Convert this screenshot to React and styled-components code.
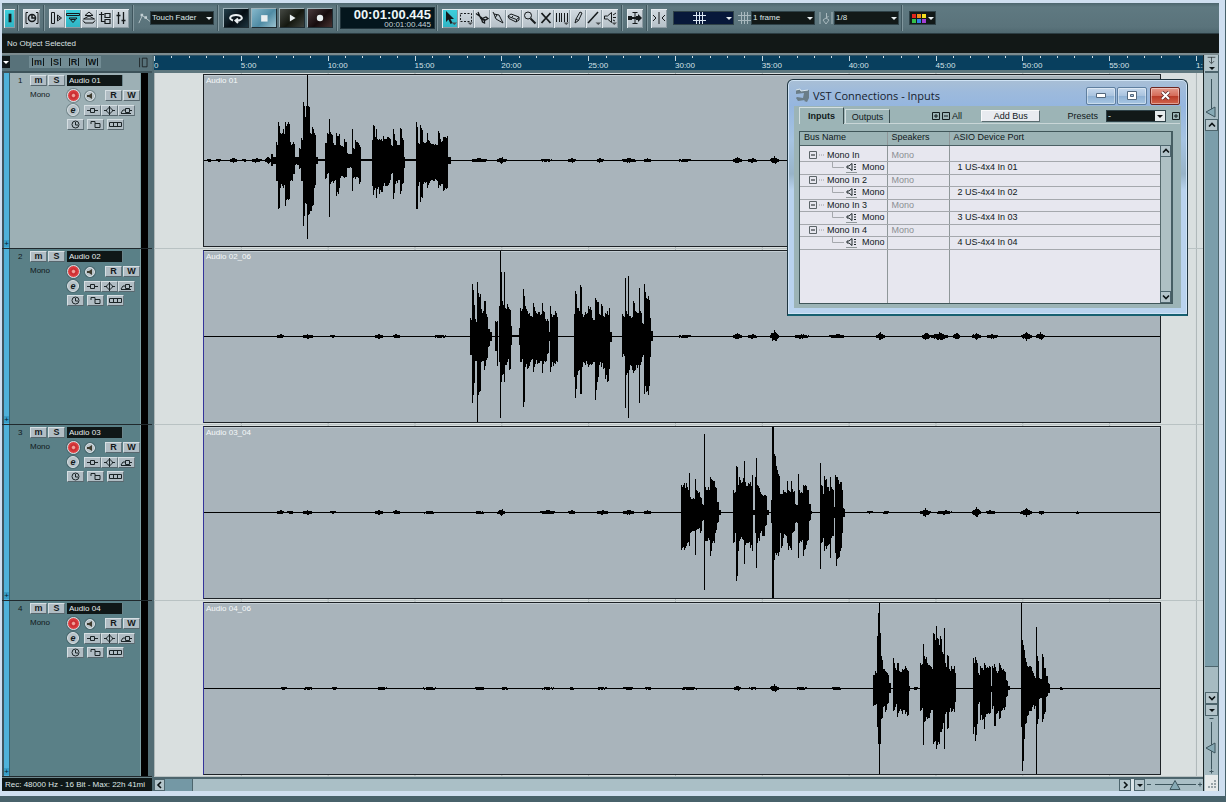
import { Fragment } from "react";
import styled, { createGlobalStyle, css } from "styled-components";

const GlobalStyle = createGlobalStyle`
  * {
    box-sizing: border-box;
  }
  body {
    margin: 0;
    font-family: "Liberation Sans", Arial, sans-serif;
    font-size: 8px;
    line-height: 10px;
    color: #10181a;
  }
  button, input, select {
    margin: 0;
    padding: 0;
    border: 0;
    border-radius: 0;
    font: inherit;
    color: inherit;
    appearance: none;
  }
  svg {
    display: block;
    flex: none;
  }
`

const Desktop = styled.div`
  display: flex;
  min-height: 100vh;
  padding: 0 1px 6px 0;
  background: #48626b;
`

const Frame = styled.div`
  position: relative;
  display: flex;
  flex-direction: column;
  flex: 1;
  min-width: 0;
  padding: 3px 6px 5px 2px;
  background: #cfdff0;
`

/* ---------- toolbar ---------- */

const Toolbar = styled.header`
  display: flex;
  align-items: center;
  height: 31px;
  padding: 0 2px;
  overflow: hidden;
  background: linear-gradient(#4d666e, #5f7981 4px, #5a737b 24px, #4f6870);
  border-bottom: 1px solid #2c3d43;
`

const Group = styled.div`
  display: flex;
  align-items: center;
  flex: none;
  gap: ${(p) => p.$gap || 0}px;
  height: 26px;
  padding: 0 ${(p) => p.$pad ?? 4}px;
  border-right: ${(p) => (p.$last ? 0 : 1)}px solid #81979e;
  box-shadow: ${(p) => (p.$last ? "none" : "inset -1px 0 #3f565e")};
`

const ToolButton = styled.button`
  display: flex;
  align-items: center;
  justify-content: center;
  width: ${(p) => p.$width || 16}px;
  height: 19px;
  color: #15191b;
  background: ${(p) => (p.$active ? "linear-gradient(#3fd0dc, #2fb3c4)" : "linear-gradient(#d3dbe1, #b4bfc7)")};
  box-shadow: inset 1px 1px #e3eaee, inset -1px -1px #8d9ba3;
`

const transportColors = {
  cycle: "#24404b, #050d13 55%, #1b333d",
  stop: "#86b8cb, #4f8ba4 55%, #9bc3d0",
  play: "#464a45, #14170f 55%, #3d423d",
  record: "#493a3d, #160b0d 55%, #46302f",
}

const TransportButton = styled.button`
  display: flex;
  align-items: center;
  justify-content: center;
  width: 26px;
  height: 20px;
  color: #e8eef0;
  background: linear-gradient(135deg, ${(p) => transportColors[p.$kind]});
  border: 1px solid #1e2c32;
  border-top-color: #9fb3ba;
  border-left-color: #9fb3ba;
`

const Clock = styled.div`
  display: flex;
  flex-direction: column;
  align-items: flex-end;
  width: 95px;
  height: 22px;
  padding: 1px 3px 0 0;
  color: #eef7f8;
  background: #04161d;
  border: 1px solid #22343b;
`

const ClockMain = styled.strong`
  font-size: 13px;
  line-height: 12px;
`

const ClockSub = styled.span`
  line-height: 8px;
  color: #c3d3d7;
`

const SelectBox = styled.span`
  position: relative;
  display: block;
  width: ${(p) => p.$width}px;
  height: ${(p) => p.$height || 14}px;
  &::after {
    content: "";
    position: absolute;
    right: ${(p) => (p.$light ? 3 : 2)}px;
    top: calc(50% - 1px);
    border: 3px solid transparent;
    border-top-color: ${(p) => (p.$light ? "#111" : "#e9f0f2")};
    border-bottom: 0;
    pointer-events: none;
  }
`

const Select = styled.select`
  display: block;
  width: 100%;
  height: 100%;
  padding: 0 10px 0 1px;
  color: #dfe7e8;
  background: ${(p) => (p.$light ? "linear-gradient(to left, #e8edee 10px, #121918 10px)" : "#121918")};
  border: 1px solid #2f4248;
`

const MenuButton = styled.button`
  display: flex;
  align-items: center;
  justify-content: center;
  width: 100%;
  height: 100%;
  padding-right: 8px;
  color: #dbe7f2;
  background: ${(p) => p.$color || "#121918"};
  border: 1px solid #2f4248;
`

const InfoLine = styled.div`
  height: 21px;
  padding: 5px 5px 0;
  color: #dde3e3;
  background: #121817;
  border-bottom: 2px solid #7c8b8f;
`

/* ---------- project area ---------- */

const Project = styled.main`
  display: flex;
  flex: 1;
  min-height: 0;
  background: #526c74;
`

const TrackColumn = styled.section`
  display: flex;
  flex-direction: column;
  width: 150px;
  flex: none;
`

const TrackColumnHead = styled.div`
  display: flex;
  align-items: center;
  height: 18px;
  padding: 0 3px 2px 0;
  background: #58727a;
  border-bottom: 2px solid #3d535a;
`

const HeadMenu = styled.button`
  display: flex;
  align-items: center;
  justify-content: center;
  width: 8px;
  height: 12px;
  background: #101719;
`

const HeadModes = styled.div`
  display: flex;
  margin: 0 auto 0 19px;
  background: #728c94;
`

const HeadMode = styled.button`
  display: flex;
  align-items: center;
  justify-content: center;
  width: 18px;
  height: 12px;
  font-size: 9px;
  font-weight: bold;
  line-height: 8px;
  color: #10181a;
  background: none;
  span {
    padding: 0 1px;
    border: 1px solid #10181a;
    border-width: 0 1px;
  }
`

const HeadDivide = styled.button`
  color: #15191b;
  background: none;
`

const TrackRow = styled.article`
  display: flex;
  height: 176px;
  flex: none;
  padding-right: 4px;
  background: linear-gradient(to left, #526c74 4px, ${(p) => (p.$selected ? "#9db0b5" : "#5a8087")} 4px);
  border-bottom: 1px solid #20292d;
`

const TrackStrip = styled.div`
  display: flex;
  align-items: flex-end;
  width: 8px;
  border-left: 2px solid #40565f;
  border-right: 1px solid #36616f;
  background: #4fb2da;
`

const ExpandButton = styled.button`
  width: 5px;
  height: 7px;
  margin-bottom: 1px;
  line-height: 7px;
  color: #06222e;
  background: #379ec8;
`

const TrackBody = styled.div`
  flex: 1;
  border-right: 1px solid #7d9fa5;
`

const TrackLine = styled.div`
  display: flex;
  align-items: center;
  height: ${(p) => (p.$last ? 14 : 15)}px;
`

const TrackNumber = styled.span`
  width: 20px;
  padding-left: 8px;
`

const TrackFormat = styled.span`
  width: 37px;
  padding-bottom: 2px;
`

const MuteSolo = styled.div`
  display: flex;
  gap: 1px;
  width: 37px;
`

const TrackName = styled.input`
  width: 56px;
  height: 11px;
  padding: 0 2px;
  color: #e6eced;
  background: #0f1717;
  border-right: 1px solid #6d868c;
`

const KeyButton = styled.button`
  display: flex;
  align-items: center;
  justify-content: center;
  width: 17px;
  height: 11px;
  font-size: 9px;
  font-weight: bold;
  line-height: 9px;
  color: #14191b;
  background: #b1bdc4;
  border: 1px solid #d6dfe3;
  border-right-color: #66767d;
  border-bottom-color: #56666d;
`

const RoundButton = styled.button`
  display: flex;
  align-items: center;
  justify-content: center;
  width: ${(p) => p.$size}px;
  height: ${(p) => p.$size}px;
  border-radius: 50%;
  font-size: 9px;
  font-weight: bold;
  font-style: italic;
  line-height: 8px;
  background: ${(p) => p.$color || "#b7c2c8"};
  border: 1px solid #d9e1e4;
  box-shadow: 0 0 0 1px rgba(40, 60, 66, 0.35);
`

const Spread = styled.div`
  display: flex;
  align-items: center;
  gap: ${(p) => p.$gap || 0}px;
  padding-left: ${(p) => p.$left || 0}px;
`

const Meter = styled.div`
  width: 7px;
  background: #000;
`

const StatusLine = styled.div`
  height: 14px;
  margin-top: auto;
  padding: 2px 3px;
  overflow: hidden;
  white-space: nowrap;
  color: #dfe6e6;
  background: #0f1717;
  border-top: 1px solid #6d868c;
`

const Arranger = styled.section`
  display: flex;
  flex-direction: column;
  flex: 1;
  min-width: 0;
  margin-left: 2px;
  border-right: 1px solid #1b2528;
`

const Ruler = styled.div`
  display: grid;
  grid-template-columns: repeat(12, 1fr) 7px;
  height: 18px;
  overflow: hidden;
  background: #083f5e;
  border-top: 1px solid #2e5468;
  border-bottom: 3px solid #5e777e;
`

const RulerCell = styled.div`
  display: grid;
  grid-template-columns: repeat(5, 1fr);
  grid-template-rows: 5px 9px;
  min-width: 0;
  color: #d3e0e6;
  white-space: nowrap;
`

const Tick = styled.i`
  height: ${(p) => (p.$major ? 5 : 2)}px;
  border-left: 1px solid #c8d8e0;
`

const RulerLabel = styled.span`
  grid-column: 1 / -1;
  line-height: 9px;
`

const Lanes = styled.div`
  flex: 1;
  background-color: #d9dfdf;
  background-image: linear-gradient(to right, #adb6b7 1px, transparent 1px);
  background-size: calc((100% - 7px) / 12) 100%;
`

const Lane = styled.div`
  height: 176px;
  padding: 1px 42px 1px 49px;
  border-bottom: 1px solid #b9c2c3;
`

const Clip = styled.div`
  display: grid;
  height: 173px;
  background: #a9b4bb;
  border: 1px solid #1d2226;
  border-left-color: ${(p) => (p.$first ? "#1d2226" : "#34349a")};
  box-shadow: inset 0 1px #c3cdd3;
  > * {
    grid-area: 1 / 1;
  }
  > svg {
    width: 100%;
    height: 171px;
  }
`

const ClipName = styled.span`
  padding: 1px 2px;
  color: #f6f9fa;
`

const ScrollRow = styled.div`
  display: flex;
  height: 14px;
  background: #aabfc6;
  border-top: 2px solid #4d656d;
`

const ScrollButton = styled.button`
  display: flex;
  align-items: center;
  justify-content: center;
  width: ${(p) => p.$width || 11}px;
  height: ${(p) => p.$height || 12}px;
  flex: none;
  color: #0b1214;
  background: #b3c4ca;
  border: 1px solid #4d656d;
`

const ScrollThumb = styled.div`
  width: ${(p) => p.$width || 28}px;
  background: #7498a5;
  border-right: 1px solid #4d656d;
`

const ScrollSpace = styled.div`
  flex: 1;
`

const ZoomRow = styled.div`
  display: flex;
  border-left: 3px solid #dde6ea;
`

const SideColumn = styled.aside`
  display: flex;
  flex-direction: column;
  width: 15px;
  padding-left: 1px;
  background: #a6bbc2;
  border-right: 1px solid #4d656d;
`

const SideHead = styled.div`
  display: flex;
  flex-direction: column;
  align-items: center;
  justify-content: space-between;
  height: 18px;
  padding: 1px 0;
  background: #b3c4ca;
  border-bottom: 2px solid #4d656d;
`

const SideThumb = styled.div`
  flex: 1;
  background: #7b9eab;
  border-bottom: 1px solid #4d656d;
`

const SideSpace = styled.div`
  height: 25px;
`

const Grip = styled.div`
  display: flex;
  align-items: flex-end;
  justify-content: flex-end;
  height: 16px;
  padding: 2px;
  background: #e6eaea;
`

/* ---------- connections window ---------- */

const Window = styled.section`
  position: absolute;
  top: 79px;
  right: 37px;
  display: flex;
  flex-direction: column;
  width: 401px;
  height: 237px;
  padding: 0 6px 6px;
  font-size: 9px;
  background: linear-gradient(#a9bfd5, #9dbadc 12px, #95b6df 26px, #a6c4e2 60px, #98b4c8 94px, #b9d3ee 110px);
  border: 1px solid #1f3540;
  border-bottom: 2px solid #166070;
  border-radius: 6px 6px 0 0;
  box-shadow: inset 0 0 0 1px #cfe3f5;
`

const WindowBar = styled.div`
  display: flex;
  align-items: center;
  height: 26px;
  padding: 5px 1px 0;
`

const WindowTitle = styled.h1`
  flex: 1;
  margin: 0 0 0 3px;
  font-family: "Open Sans", "Noto Sans", sans-serif;
  font-size: 11px;
  font-weight: normal;
  line-height: 16px;
  color: #16222e;
`

const WindowButton = styled.button`
  display: flex;
  align-items: center;
  justify-content: center;
  width: 30px;
  height: 18px;
  margin-left: 1px;
  border: 1px solid #5f7f9f;
  border-radius: 2px;
  background: linear-gradient(#c6d9ed, #a8c2de 50%, #8eb0d3 50%, #a8c7e3);
  box-shadow: inset 0 0 0 1px rgba(255, 255, 255, 0.4);
  ${(p) => p.$close && css`
    margin-left: 3px;
    border-color: #6d2620;
    background: linear-gradient(#e39a8c, #d56a58 50%, #b93a27 50%, #d1644c);
  `}
`

const Panel = styled.div`
  display: flex;
  flex-direction: column;
  flex: 1;
  min-height: 0;
  padding: 2px 0 4px 5px;
  background: #9cb4b6;
`

const PanelTop = styled.div`
  display: flex;
  align-items: center;
  height: 16px;
  margin-right: 1px;
  border-bottom: 1px solid #c9d6d7;
`

const Tab = styled.button`
  align-self: flex-end;
  width: 46px;
  height: ${(p) => (p.$active ? 17 : 14)}px;
  margin-right: 1px;
  margin-bottom: ${(p) => (p.$active ? -1 : 0)}px;
  font-weight: ${(p) => (p.$active ? "bold" : "normal")};
  color: #10191b;
  background: #9cb4b6;
  border: 1px solid #d3dfe0;
  border-right-color: #3a4d50;
  border-bottom: 0;
`

const AllTools = styled.div`
  display: flex;
  align-items: center;
  gap: 2px;
  width: 50px;
  margin-left: 41px;
`

const MiniButton = styled.button`
  display: flex;
  background: none;
  color: ${(p) => (p.$soft ? "#5c6468" : "#121b1d")};
`

const AddBus = styled.button`
  width: 61px;
  height: 12px;
  color: #11181a;
  background: #e8ebf0;
  border: 1px solid #f9fafb;
  border-right-color: #5a6c70;
  border-bottom-color: #5a6c70;
`

const PresetLabel = styled.label`
  display: flex;
  align-items: center;
  gap: 8px;
  margin: 0 6px 0 27px;
`

const TableBox = styled.div`
  display: flex;
  flex: 1;
  margin: 7px 8px 0 0;
  min-height: 0;
  background: #e7e7ef;
  border: 1px solid #3f5659;
  border-right: 2px solid #465e63;
`

const BusTable = styled.table`
  flex: 1;
  height: 100%;
  border-collapse: collapse;
  table-layout: fixed;
  line-height: 11px;
  th, td {
    padding: 0;
    overflow: hidden;
    font-weight: normal;
    text-align: left;
    vertical-align: ${(p) => p.$align || "top"};
    white-space: nowrap;
    border-right: 1px solid #8f9799;
    border-bottom: 1px solid #a5a8ad;
  }
  tbody tr:first-child td {
    vertical-align: bottom;
  }
  th {
    height: 13px;
    padding-left: 4px;
    background: #9cb4b6;
    border-bottom-color: #4b6064;
  }
  tr > :last-child {
    border-right: 0;
  }
  tbody tr:last-child td {
    border-bottom: 0;
  }
`

const BusRow = styled.tr`
  height: ${(p) => p.$height}px;
`

const Cell = styled.td`
  color: ${(p) => (p.$faint ? "#8b8f94" : "#10181a")};
`

const TreeItem = styled.span`
  display: flex;
  align-items: center;
  gap: 2px;
  height: 11px;
  padding-left: ${(p) => (p.$child ? 32 : 9)}px;
`

const Pad = styled.span`
  padding-left: ${(p) => p.$left}px;
`

const TableScroll = styled.div`
  display: flex;
  flex-direction: column;
  justify-content: space-between;
  width: 11px;
  flex: none;
  background: #aec0c4;
  border-top: 13px solid #9cb4b6;
  box-shadow: inset 1px 0 #55696d;
`

/* ---------- icons ---------- */

const Icon = ({ size = 14, children }) => (
  <svg width={size} height={size} viewBox="0 0 14 14" fill="none" stroke="currentColor" strokeWidth="1" aria-hidden="true">
    {children}
  </svg>
)

const SmallIcon = ({ children }) => (
  <svg width="13" height="9" viewBox="0 0 13 9" fill="none" stroke="#1b2427" strokeWidth="1" aria-hidden="true">
    {children}
  </svg>
)

const corner = <path d="M8.5 11.500h5.500l-2.700 2.500z" fill="#4b4f52" stroke="none"/>

const viewTools = [
  { label: "Show Inspector", icon: <path d="M1.500 1.500h3v11h-3zM7.500 4v6M7.500 4l4 3-4 3M9 6v2"/> },
  { label: "Show Info", active: true, icon: <path d="M.5 2.500h13v2H.5zM3 7h8l-4 4.500zM5 8.500h4"/> },
  { label: "Show Overview", icon: <path d="M7 1l4 3.500H3zM7 5l5.500 3H1.500zM1 9.500l2 2.500h8l2-2.500"/> },
  { label: "Open Pool", icon: <path d="M1 3.500h5M3.500 1v9.500h3M7 2.500h5v4H7zM7 8.500h5v4H7z" strokeWidth="1.200"/> },
  { label: "Open Mixer", icon: <path d="M4.500 1v12M9.500 1v12M2.500 4.500h4M7.500 9.500h4" strokeWidth="1.300"/> },
]

const editTools = [
  { label: "Object Selection", active: true, icon: <><path d="M3 0v11l2.500-2.500L7.500 13l2-1-2-4H11z" fill="currentColor" stroke="none"/>{corner}</> },
  { label: "Range Selection", icon: <><path d="M1.500 2.500h11v8h-11z" strokeDasharray="2 1.500"/>{corner}</> },
  { label: "Split", icon: <path d="M1 2.500l6 4.500M3 1l3 7M7 7.500l4-1.500 2 1.500-2.500 1.500zM6.500 8l1 3 2 1 0-2.500z" strokeWidth="1.300"/> },
  { label: "Glue", icon: <path d="M2 1l1 2M3 3l5 1 4 8-7-4zM6 4l-2 3"/> },
  { label: "Erase", icon: <path d="M1 5l3-2 8 3v3l-3 2-7-3.500zM1.500 5.500l8 3 2.500-2M9.500 8.500V11M4 7l2-2"/> },
  { label: "Zoom", icon: <><circle cx="5" cy="4.500" r="3.500"/><path d="M7.500 7.500l5 5" strokeWidth="2"/></> },
  { label: "Mute", icon: <path d="M2.500 2l9 10M11.500 2l-9 10" strokeWidth="1.800"/> },
  { label: "Time Warp", icon: <><path d="M1.500 2v9M4.500 2v9M6.500 2v9M9.500 2v9M12.500 2v9"/>{corner}</> },
  { label: "Draw", icon: <path d="M4 12l1-4 4-7 2 1-3.500 7.500zM5 8l2.500 1.500"/> },
  { label: "Line", icon: <><path d="M1 12L11 1" strokeWidth="1.500"/>{corner}</> },
  { label: "Play", icon: <><path d="M1.500 5h3l4-3.500v10l-4-3.500h-3zM10 4l3-2M10 6.500h3M10 9l2 1"/>{corner}</> },
]

const GridIcon = ({ soft }) => (
  <svg width="13" height="12" viewBox="0 0 13 12" stroke={soft ? "#a9b9be" : "currentColor"} aria-hidden="true">
    <path d="M3.500 0v12M6.500 0v12M9.500 0v12M0 3.500h13M0 8.500h13"/>
  </svg>
)

const Arrow = ({ dir }) => {
  const paths = {
    left: "M5 1L2 4l3 3",
    right: "M3 1l3 3-3 3",
    up: "M1 5.500l3-3 3 3",
    down: "M1 2.500l3 3 3-3",
  }
  return (
    <svg width="8" height="8" viewBox="0 0 8 8" fill="none" stroke="currentColor" strokeWidth="1.600" aria-hidden="true">
      <path d={paths[dir]}/>
    </svg>
  )
}

const DropMark = ({ color = "#0b1214" }) => (
  <svg width="6" height="3" viewBox="0 0 6 3" aria-hidden="true">
    <path d="M0 0h6L3 3z" fill={color}/>
  </svg>
)

/* ---------- waveforms ---------- */

// each entry is [x, level above zero, level below zero], held up to the next entry
const waves = [
  [
    [67,6,5],[69,3,3],[72,18,20],[74,38,48],[76,27,27],[79,31,27],[81,38,45],[84,38,39],[86,18,20],[89,18,13],[91,3,4],[95,12,8],[97,22,20],[99,58,65],[101,43,42],[102,54,43],[103,85,78],[104,54,54],[106,27,50],[108,33,45],[110,27,27],[112,3,3],[114,1,0],
    [121,17,18],[123,27,13],[125,41,56],[126,28,23],[129,17,22],[132,27,35],[135,26,27],[136,15,17],[140,21,17],[143,7,7],[148,31,30],[149,12,17],[151,20,18],[155,15,23],[157,1,0],
    [168,20,25],[169,35,34],[171,23,27],[172,31,37],[173,21,28],[175,21,33],[179,24,25],[185,22,22],[187,15,13],[189,31,38],[191,20,23],[193,15,22],[196,32,33],[198,22,23],[200,3,7],[201,1,0],
    [212,38,48],[214,17,25],[216,35,41],[218,30,37],[219,18,23],[223,27,27],[224,20,24],[226,17,20],[234,29,27],[236,21,25],[239,23,30],[243,24,27],[244,3,3],[247,0,0],
  ],
  [
    [266,18,18],[268,52,66],[270,31,46],[271,17,24],[273,54,85],[274,43,58],[277,27,25],[280,35,33],[282,22,23],[284,7,10],[286,4,4],[288,0,0],[291,15,14],[293,15,29],[294,0,0],
    [295,30,25],[296,85,81],[297,64,45],[298,35,38],[300,64,45],[301,28,28],[303,32,25],[305,27,33],[307,10,8],[308,1,0],
    [315,8,8],[316,28,25],[319,47,70],[321,30,30],[323,25,32],[326,20,25],[329,33,35],[331,25,27],[338,33,36],[339,25,27],[341,17,25],[343,17,17],[345,4,4],[346,30,35],[347,22,30],[351,25,27],[353,19,25],[354,0,0],
    [370,22,40],[371,45,61],[373,28,38],[376,51,57],[378,22,30],[381,24,28],[384,30,30],[388,18,27],[391,38,63],[393,34,45],[395,22,28],[397,32,30],[399,20,32],[401,23,42],[403,25,45],[405,28,32],[406,4,5],[408,0,0],
    [418,22,20],[421,58,71],[422,25,38],[424,60,81],[425,20,33],[429,35,36],[431,25,33],[435,48,66],[436,25,28],[438,13,20],[440,52,57],[442,38,55],[444,40,58],[446,18,20],[447,5,4],[449,0,0],
  ],
  [
    [477,27,37],[480,29,37],[483,25,30],[485,39,33],[486,15,20],[491,33,42],[492,22,17],[496,15,20],[498,8,8],[500,78,77],[501,25,28],[506,35,43],[508,32,30],[511,25,20],[513,10,10],[515,2,2],[517,0,0],
    [529,22,30],[531,20,20],[532,46,68],[534,27,38],[535,35,28],[540,51,51],[541,30,32],[546,30,35],[548,37,38],[549,2,2],[551,35,20],[552,54,55],[553,27,30],[556,20,20],[558,17,23],[561,17,13],[563,2,2],[565,0,0],
    [567,12,10],[568,85,85],[569,85,85],[570,58,47],[572,46,42],[574,38,43],[576,18,20],[577,18,35],[579,22,25],[583,31,30],[584,22,37],[587,31,37],[588,23,20],[591,8,10],[594,38,45],[595,22,30],[599,27,43],[601,27,36],[603,22,28],[605,8,8],[607,1,1],[608,0,0],
    [616,49,56],[617,27,30],[619,18,25],[620,36,38],[623,25,33],[626,35,45],[627,25,25],[630,5,5],[631,37,40],[632,35,53],[634,32,45],[636,30,38],[638,22,20],[639,4,4],[641,0,0],
  ],
  [
    [669,13,17],[671,17,16],[673,52,38],[674,75,55],[675,85,85],[676,55,55],[677,32,30],[679,19,18],[681,17,23],[683,15,15],[685,5,4],[687,0,0],
    [689,30,22],[691,20,18],[693,25,28],[695,17,22],[698,19,25],[701,22,25],[703,18,27],[705,2,2],[706,0,0],
    [716,25,22],[719,44,56],[720,32,33],[723,25,30],[726,22,24],[729,55,55],[732,62,60],[733,50,56],[736,52,43],[738,36,40],[740,60,60],[741,25,25],[743,33,40],[745,19,23],[747,22,23],[751,15,13],[752,0,0],
    [769,30,45],[771,31,52],[773,25,35],[774,15,15],[776,22,31],[780,25,40],[781,23,28],[787,2,3],[788,22,20],[790,24,37],[792,17,25],[795,25,30],[797,20,22],[800,17,21],[802,8,8],[804,2,1],[806,0,0],
    [817,85,38],[818,48,82],[820,38,50],[821,30,35],[823,22,27],[825,22,22],[828,17,18],[830,12,20],[832,61,85],[833,32,35],[835,10,10],[838,34,33],[840,20,25],[842,12,8],[844,5,4],[846,0,0],
  ],
]

// quiet bleed from the other microphones: [centre, half width, level]
const murmurs = [
  [[4,4,1],[14,4,1],[29,5,2],[40,4,1],[52,6,2],[64,4,3],[275,10,2],[297,5,3],[342,11,1],[367,5,2],[396,4,2],[424,9,2],[443,4,2],[481,14,1],[533,5,3],[548,5,2],[570,4,4]],
  [[76,4,2],[103,7,2],[128,4,1],[175,5,2],[192,4,2],[236,12,1],[481,14,1],[533,5,3],[548,5,2],[570,4,6],[597,9,2],[632,9,2],[676,4,4],[722,4,4],[735,9,4],[752,3,4],[772,5,3],[788,7,2],[822,5,4],[836,4,4]],
  [[76,4,2],[86,6,1],[103,6,2],[128,5,1],[175,5,2],[192,4,2],[225,10,1],[275,9,1],[297,4,3],[343,9,2],[367,4,2],[398,7,2],[424,7,2],[443,4,2],[665,6,1],[681,5,1],[721,5,4],[740,9,2],[772,4,5],[786,5,2],[822,6,4],[837,3,2],[873,2,1]],
  [[79,6,1],[104,9,1],[130,4,1],[178,8,1],[225,11,1],[275,11,1],[300,6,1],[343,11,1],[367,5,1],[398,9,1],[424,9,1],[444,5,1],[485,14,1],[533,4,2],[548,6,1],[570,4,4],[597,9,1],[632,9,1],[711,4,1],[857,2,1]],
]

const grain = (x, seed) => {
  const n = Math.sin(x * 12.9898 + seed * 78.233) * 43758.5453
  return n - Math.floor(n)
}

const bar = (x, up, down) => `M${x} ${85 - up}h1v${up + down + 1}h-1z`

const wavePath = (index) => {
  const parts = []
  waves[index].forEach(([x, up, down], i, all) => {
    const end = i + 1 < all.length ? all[i + 1][0] : x
    for (let px = x; px < end; px++) {
      if (up + down === 0) continue
      const lift = px === x ? 1 : 0.84 + grain(px, 1) * 0.16
      const drop = px === x ? 1 : 0.84 + grain(px, 2) * 0.16
      parts.push(bar(px, Math.round(up * lift), Math.round(down * drop)))
    }
  })
  murmurs[index].forEach(([centre, half, level]) => {
    for (let px = centre - half; px <= centre + half; px++) {
      const h = level * (1 - Math.abs(px - centre) / (half + 1))
      parts.push(bar(px, Math.round(h * (0.6 + grain(px, 3) * 0.5)), Math.round(h * (0.5 + grain(px, 4) * 0.5))))
    }
  })
  return parts.join("")
}

/* ---------- parts ---------- */

const DarkSelect = ({ label, value, width }) => (
  <SelectBox $width={width}>
    <Select aria-label={label} defaultValue={value}>
      <option>{value}</option>
    </Select>
  </SelectBox>
)

const ToolBank = ({ tools }) => tools.map((tool) => (
  <ToolButton key={tool.label} aria-label={tool.label} $active={tool.active}>
    <Icon>{tool.icon}</Icon>
  </ToolButton>
))

const swatches = ["#e2261d", "#f08a1a", "#f3e01f", "#35c04a", "#2f7fe6", "#a33fd6"]

const MainToolbar = () => (
  <Toolbar>
    <Group $pad={0}>
      <ToolButton aria-label="Activate Project" $active $width={11}>
        <Icon size={10}><path d="M7 1v12" strokeWidth="4"/></Icon>
      </ToolButton>
      <Spread $left={3}/>
    </Group>
    <Group>
      <ToolButton aria-label="Constrain Delay" $width={17}>
        <Icon>
          <path d="M3 1.500H1v11h2M11 1.500h2v11h-2"/>
          <circle cx="7" cy="7" r="3.500" strokeWidth="1.500"/>
          <path d="M7 4v3h3" strokeWidth="1.500"/>
        </Icon>
      </ToolButton>
    </Group>
    <Group><ToolBank tools={viewTools}/></Group>
    <Group>
      <Icon size={12}><path d="M1 13l4-9 4 3 5 4" stroke="#c3d0d4"/><path d="M3 2h3v3H3zM7.500 5h3v3h-3z" fill="#c3d0d4" stroke="none"/></Icon>
      <DarkSelect label="Automation Mode" value="Touch Fader" width={64}/>
    </Group>
    <Group $gap={2}>
      <TransportButton $kind="cycle" aria-label="Cycle">
        <Icon><path d="M4 9.500C-1 8 1 4 7 4s8 4 3 5.500H7M9 7.500l-2.500 2L9 12" strokeWidth="2"/></Icon>
      </TransportButton>
      <TransportButton $kind="stop" aria-label="Stop">
        <Icon size={10}><path d="M3 3h9v9H3z" fill="currentColor" stroke="none"/></Icon>
      </TransportButton>
      <TransportButton $kind="play" aria-label="Start">
        <Icon size={10}><path d="M4 2l8 5-8 5z" fill="currentColor" stroke="none"/></Icon>
      </TransportButton>
      <TransportButton $kind="record" aria-label="Record">
        <Icon size={10}><circle cx="7" cy="7" r="4.500" fill="currentColor" stroke="none"/></Icon>
      </TransportButton>
    </Group>
    <Group $pad={2}>
      <Clock>
        <ClockMain>00:01:00.445</ClockMain>
        <ClockSub>00:01:00.445</ClockSub>
      </Clock>
    </Group>
    <Group><ToolBank tools={editTools}/></Group>
    <Group>
      <ToolButton aria-label="Autoscroll">
        <Icon><path d="M7 1v12M4.500 1.500h5M4.500 12.500h5"/><path d="M0 5h4v4H0zM8 5h2V3l4 4-4 4V9H8zM4 6h4v2H4z" fill="currentColor" stroke="none"/></Icon>
      </ToolButton>
    </Group>
    <Group $gap={6} $pad={3}>
      <ToolButton aria-label="Snap">
        <Icon><path d="M7 1v12M1 4l3 3-3 3M13 4l-3 3 3 3"/></Icon>
      </ToolButton>
      <Spread $gap={4}>
        <SelectBox $width={61}>
          <MenuButton aria-label="Snap Type" $color="#07183a"><GridIcon/></MenuButton>
        </SelectBox>
        <Spread><GridIcon soft/><DarkSelect label="Grid Type" value="1 frame" width={64}/></Spread>
        <Spread $gap={1}>
          <Icon>
            <path d="M1 1v12M13 1v12" stroke="#a9b9be"/>
            <path d="M7.500 2v5l2-2M4 9l3-2 3 2-3 4z" stroke="#a9b9be"/>
          </Icon>
          <DarkSelect label="Quantize" value="1/8" width={65}/>
        </Spread>
      </Spread>
    </Group>
    <Group $last $pad={6}>
      <SelectBox $width={27}>
        <MenuButton aria-label="Colors">
          <svg width="14" height="9" viewBox="0 0 14 9" aria-hidden="true">
            {swatches.map((color, i) => (
              <rect key={color} x={(i % 3) * 5} y={i < 3 ? 0 : 5} width="4" height="4" fill={color}/>
            ))}
          </svg>
        </MenuButton>
      </SelectBox>
    </Group>
  </Toolbar>
)

const Track = ({ number, name, selected }) => (
  <TrackRow $selected={selected}>
    <TrackStrip><ExpandButton aria-label={`Expand ${name}`}>+</ExpandButton></TrackStrip>
    <TrackBody>
      <TrackLine>
        <TrackNumber>{number}</TrackNumber>
        <MuteSolo>
          <KeyButton>m</KeyButton>
          <KeyButton>S</KeyButton>
        </MuteSolo>
        <TrackName aria-label={`Track ${number} name`} defaultValue={name}/>
      </TrackLine>
      <TrackLine>
        <TrackNumber/>
        <TrackFormat>Mono</TrackFormat>
        <RoundButton aria-label="Record Enable" $size={13} $color="radial-gradient(circle, #f0a09a 15%, #c8282c 30%, #e2494b 70%)"/>
        <Spread $left={5}>
          <RoundButton aria-label="Monitor" $size={10}>
            <svg width="6" height="6" viewBox="0 0 6 6" aria-hidden="true"><path d="M0 2h2l3-2v6L2 4H0z" fill="#3d3a2c"/></svg>
          </RoundButton>
        </Spread>
        <Spread $left={10} $gap={1}>
          <KeyButton>R</KeyButton>
          <KeyButton>W</KeyButton>
        </Spread>
      </TrackLine>
      <TrackLine $last>
        <Spread $left={57} $gap={5}>
          <RoundButton aria-label="Edit Channel" $size={12}>e</RoundButton>
          <Spread>
            <KeyButton aria-label="Inserts"><SmallIcon><path d="M1 4.500h3M9 4.500h3M4.500 2.500h4v4h-4z"/></SmallIcon></KeyButton>
            <KeyButton aria-label="Equalizer"><SmallIcon><path d="M1 4.500h3M9 4.500h3M6.500 0v9M6.500 1L3 4.500 6.500 8 10 4.500z"/></SmallIcon></KeyButton>
            <KeyButton aria-label="Sends"><SmallIcon><path d="M1 7.500h10M1 7l2-3h2M5.500 2.500h4v4h-4zM9 4.500h3"/></SmallIcon></KeyButton>
          </Spread>
        </Spread>
      </TrackLine>
      <TrackLine>
        <Spread $left={57} $gap={3}>
          <KeyButton aria-label="Time Base"><SmallIcon><circle cx="6.500" cy="4.500" r="3.500"/><path d="M6.500 2v3H9"/></SmallIcon></KeyButton>
          <KeyButton aria-label="Lock"><SmallIcon><path d="M2 4V1.500h4v2M6 3.500h5v4H6z"/></SmallIcon></KeyButton>
          <KeyButton aria-label="Lanes"><SmallIcon><path d="M.5 2.500h12v4H.5zM4.500 2.500v4M8.500 2.500v4"/></SmallIcon></KeyButton>
        </Spread>
      </TrackLine>
    </TrackBody>
    <Meter/>
  </TrackRow>
)

const tracks = [
  { name: "Audio 01", clip: "Audio 01", selected: true },
  { name: "Audio 02", clip: "Audio 02_06" },
  { name: "Audio 03", clip: "Audio 03_04" },
  { name: "Audio 04", clip: "Audio 04_06" },
]

const times = ["0", "5:00", "10:00", "15:00", "20:00", "25:00", "30:00", "35:00", "40:00", "45:00", "50:00", "55:00"]

const VerticalZoom = ({ height, at, signs }) => (
  <svg width="13" height={height} viewBox={`0 0 13 ${height}`} stroke="#3d555d" fill="none" aria-hidden="true">
    <path d={`M6.500 6V${height - 6}`}/>
    {signs && <path d={`M4.500 2.500h4M4.500 ${height - 3.5}h4M6.500 ${height - 5.5}v4`}/>}
    <path d={`M1 ${at}l9-5v10z`} fill="#86a9b4"/>
  </svg>
)

const buses = ["Mono In", "Mono In 2", "Mono In 3", "Mono In 4"]

const PlusMinus = ({ plus }) => (
  <svg width="8" height="8" viewBox="0 0 8 8" fill="none" stroke="currentColor" aria-hidden="true">
    <path d="M.5.5h7v7h-7z"/>
    <path d={`M2 4h4${plus ? "M4 2v4" : ""}`} stroke="#121b1d"/>
  </svg>
)

const ConnectionsWindow = () => (
  <Window aria-label="VST Connections">
    <WindowBar>
      <svg width="15" height="15" viewBox="0 0 15 15" aria-hidden="true">
        <path d="M1 2l4-1 1 2 8-1v8l-2 4-3-1 1-1-7 1-2-3 1-1 6 1 1-5-8 1z" fill="#6b7e88"/>
        <path d="M1 2l4-1 1 2 7-1" stroke="#dce8ee" fill="none"/>
      </svg>
      <WindowTitle>VST Connections - Inputs</WindowTitle>
      <WindowButton aria-label="Minimize">
        <svg width="10" height="5" viewBox="0 0 10 5"><path d="M.5.5h9v4h-9z" fill="#fff" stroke="#53677c"/></svg>
      </WindowButton>
      <WindowButton aria-label="Maximize">
        <svg width="10" height="9" viewBox="0 0 10 9"><path d="M.5.5h9v8h-9zM3.500 3.500h3v2h-3z" fill="#fff" fillRule="evenodd" stroke="#53677c"/></svg>
      </WindowButton>
      <WindowButton aria-label="Close" $close>
        <svg width="11" height="9" viewBox="0 0 11 9">
          <path d="M2 1l7 7M9 1L2 8" stroke="#5b2a2a" strokeWidth="3.500"/>
          <path d="M2 1l7 7M9 1L2 8" stroke="#fff" strokeWidth="2"/>
        </svg>
      </WindowButton>
    </WindowBar>
    <Panel>
      <PanelTop>
        <Tab $active>Inputs</Tab>
        <Tab>Outputs</Tab>
        <AllTools>
          <MiniButton aria-label="Expand all"><PlusMinus plus/></MiniButton>
          <MiniButton aria-label="Collapse all"><PlusMinus/></MiniButton>
          <span>All</span>
        </AllTools>
        <AddBus>Add Bus</AddBus>
        <PresetLabel>
          Presets
          <SelectBox $width={60} $height={12} $light>
            <Select $light defaultValue="-"><option>-</option></Select>
          </SelectBox>
        </PresetLabel>
        <MiniButton aria-label="Store preset"><PlusMinus plus/></MiniButton>
      </PanelTop>
      <TableBox>
        <BusTable>
          <colgroup>
            <col width="87"/>
            <col width="62"/>
            <col/>
          </colgroup>
          <thead>
            <tr>
              <th>Bus Name</th>
              <th>Speakers</th>
              <th>ASIO Device Port</th>
            </tr>
          </thead>
          <tbody>
            {buses.map((bus, i) => (
              <Fragment key={bus}>
                <BusRow $height={i === 0 ? 16 : 12}>
                  <Cell>
                    <TreeItem>
                      <MiniButton $soft aria-label={`Collapse ${bus}`}><PlusMinus/></MiniButton>
                      <svg width="6" height="2" viewBox="0 0 6 2"><path d="M0 1h6" stroke="#9a9da2" strokeDasharray="1 1"/></svg>
                      {bus}
                    </TreeItem>
                  </Cell>
                  <Cell $faint><Pad $left={4}>Mono</Pad></Cell>
                  <Cell/>
                </BusRow>
                <BusRow $height={13}>
                  <Cell>
                    <TreeItem $child>
                      <svg width="12" height="11" viewBox="0 0 12 11"><path d="M.5 0v5.500H12" fill="none" stroke="#a5a8ad"/></svg>
                      <svg width="11" height="11" viewBox="0 0 11 11" fill="none" stroke="#1b2427">
                        <path d="M1 4h2l3-2.500v7L3 6H1zM8 2.500h2M8 5h2M8 7.500h2"/>
                        <path d="M0 10.500h11" stroke="#8f9799"/>
                      </svg>
                      <Pad $left={3}>Mono</Pad>
                    </TreeItem>
                  </Cell>
                  <Cell/>
                  <Cell><Pad $left={8}>{`${i + 1} US-4x4 In 0${i + 1}`}</Pad></Cell>
                </BusRow>
              </Fragment>
            ))}
            <tr>
              <Cell/>
              <Cell/>
              <Cell/>
            </tr>
          </tbody>
        </BusTable>
        <TableScroll>
          <ScrollButton aria-label="Scroll up"><Arrow dir="up"/></ScrollButton>
          <ScrollButton aria-label="Scroll down"><Arrow dir="down"/></ScrollButton>
        </TableScroll>
      </TableBox>
    </Panel>
  </Window>
)

const App = () => {
  return (<>
    <GlobalStyle/>
    <Desktop>
      <Frame>
        <MainToolbar/>
        <InfoLine>No Object Selected</InfoLine>
        <Project>
          <TrackColumn>
            <TrackColumnHead>
              <HeadMenu aria-label="Track list menu"><DropMark color="#fff"/></HeadMenu>
              <HeadModes>
                {["m", "S", "R", "W"].map((mode) => <HeadMode key={mode}><span>{mode}</span></HeadMode>)}
              </HeadModes>
              <HeadDivide aria-label="Divide Track List">
                <Icon size={11}><path d="M2 1v12M5.500 1.500h6v11h-6z"/></Icon>
              </HeadDivide>
            </TrackColumnHead>
            {tracks.map((track, i) => (
              <Track key={track.name} number={i + 1} name={track.name} selected={track.selected}/>
            ))}
            <StatusLine>Rec: 48000 Hz - 16 Bit - Max: 22h 41mi</StatusLine>
          </TrackColumn>
          <Arranger>
            <Ruler>
              {times.map((time) => (
                <RulerCell key={time}>
                  <Tick $major/><Tick/><Tick/><Tick/><Tick/>
                  <RulerLabel>{time}</RulerLabel>
                </RulerCell>
              ))}
              <RulerCell>
                <Tick $major/>
                <RulerLabel>1:</RulerLabel>
              </RulerCell>
            </Ruler>
            <Lanes>
              {tracks.map((track, i) => (
                <Lane key={track.name}>
                  <Clip $first={i === 0}>
                    <svg viewBox="0 0 956 171" preserveAspectRatio="none" shapeRendering="crispEdges" aria-hidden="true">
                      <path d={`M0 85h956v1H0z${wavePath(i)}`} fill="#000"/>
                    </svg>
                    <ClipName>{track.clip}</ClipName>
                  </Clip>
                </Lane>
              ))}
            </Lanes>
            <ScrollRow>
              <ScrollButton aria-label="Scroll left"><Arrow dir="left"/></ScrollButton>
              <ScrollThumb/>
              <ScrollSpace/>
              <ScrollButton aria-label="Scroll right" $width={12}><Arrow dir="right"/></ScrollButton>
              <ZoomRow>
                <ScrollButton aria-label="Zoom presets"><DropMark/></ScrollButton>
                <svg width="58" height="12" viewBox="0 0 58 12" stroke="#3d555d" fill="none" aria-hidden="true">
                  <path d="M2 5.500h4M10 5.500h41M53 5.500h4M55 3.500v4"/>
                  <path d="M25 10.500l5-9 5 9z" fill="#86a9b4"/>
                </svg>
              </ZoomRow>
            </ScrollRow>
          </Arranger>
          <SideColumn>
            <SideHead>
              <Icon size={9}><path d="M1 2h12M7 2v9M3 8l4 4 4-4"/></Icon>
              <DropMark/>
            </SideHead>
            <VerticalZoom height={46} at={39}/>
            <ScrollButton aria-label="Scroll up" $width={13}><Arrow dir="up"/></ScrollButton>
            <SideThumb/>
            <SideSpace/>
            <ScrollButton aria-label="Scroll down" $width={13}><Arrow dir="down"/></ScrollButton>
            <ScrollButton aria-label="Track zoom presets" $width={13}><DropMark/></ScrollButton>
            <VerticalZoom height={59} at={32} signs/>
            <Grip>
              <svg width="9" height="9" viewBox="0 0 9 9" fill="#97a3a7" aria-hidden="true">
                <path d="M7 0h2v2H7zM4 3h2v2H4zM7 3h2v2H7zM1 6h2v2H1zM4 6h2v2H4zM7 6h2v2H7z"/>
              </svg>
            </Grip>
          </SideColumn>
        </Project>
        <ConnectionsWindow/>
      </Frame>
    </Desktop>
  </>);
}

export default App;
